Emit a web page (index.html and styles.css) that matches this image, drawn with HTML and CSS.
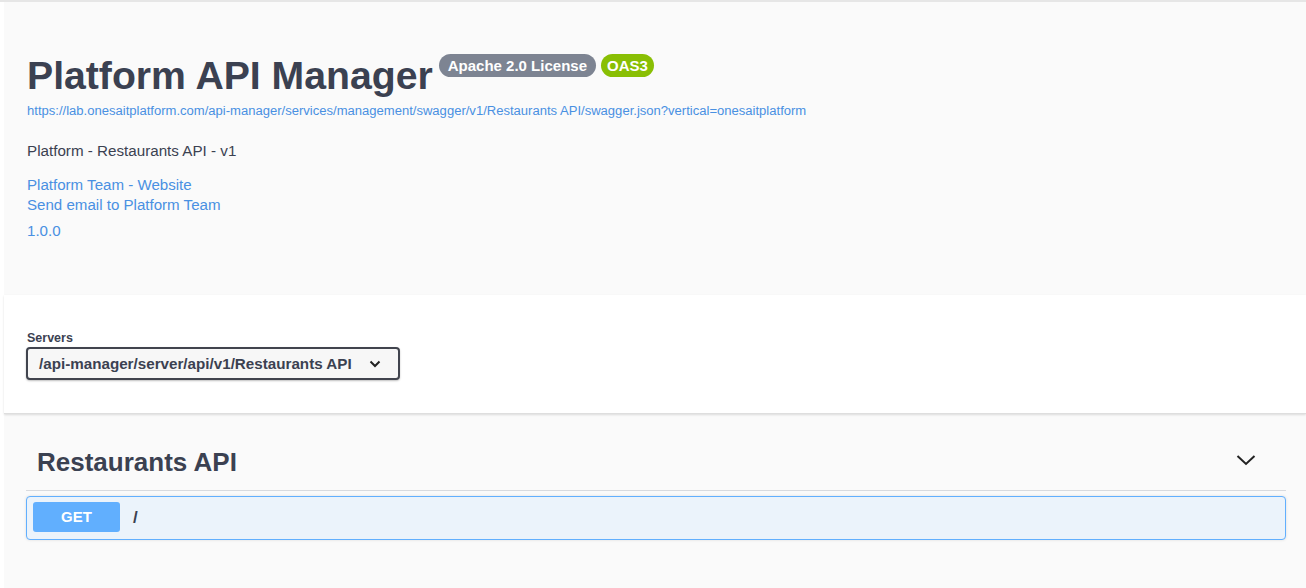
FILE: index.html
```html
<!DOCTYPE html>
<html>
<head>
<meta charset="utf-8">
<link rel="stylesheet" href="styles.css">
</head>
<body>
<div class="topline"></div>
<div class="page">
  <section class="info">
    <div class="title-row">
      <h2 class="title">Platform API Manager</h2>
      <span class="badge badge-license">Apache 2.0 License</span>
      <span class="badge badge-oas">OAS3</span>
    </div>
    <a class="spec-url" href="#">https://lab.onesaitplatform.com/api-manager/services/management/swagger/v1/Restaurants API/swagger.json?vertical=onesaitplatform</a>
    <p class="description">Platform - Restaurants API - v1</p>
    <div class="contact">
      <a class="link" href="#">Platform Team - Website</a>
      <a class="link" href="#">Send email to Platform Team</a>
    </div>
    <div class="version">1.0.0</div>
  </section>
  <section class="servers">
    <div class="servers-label">Servers</div>
    <div class="select">
      <span class="select-text">/api-manager/server/api/v1/Restaurants API</span>
      <svg class="select-chevron" width="12" height="8" viewBox="0 0 12 8"><path d="M1.5 1.5 L6 6 L10.5 1.5" fill="none" stroke="#222" stroke-width="2"/></svg>
    </div>
  </section>
  <section class="tags">
    <div class="tag-header">
      <h3 class="tag-title">Restaurants API</h3>
      <svg class="tag-chevron" width="20" height="12" viewBox="0 0 20 12"><path d="M1.5 2 L10 10 L18.5 2" fill="none" stroke="#222" stroke-width="2"/></svg>
    </div>
    <div class="opblock">
      <span class="method">GET</span>
      <span class="path">/</span>
    </div>
  </section>
</div>
</body>
</html>
```
FILE: styles.css
```css
html, body {
  margin: 0;
  padding: 0;
  background: #ffffff;
  font-family: "Liberation Sans", Arial, sans-serif;
  color: #3b4151;
}

.topline {
  height: 2px;
  background: #e6e6e6;
}

.page {
  margin-left: 4px;
}

.info {
  background: #fafafa;
  padding: 50px 20px 54px 22px;
  display: flex;
  flex-direction: column;
  align-items: flex-start;
}

.title-row {
  display: flex;
  align-items: flex-start;
}

.title {
  margin: 0;
  font-size: 39.2px;
  line-height: 47px;
  font-weight: 700;
  color: #3b4151;
  padding-left: 1px;
}

.badge {
  display: inline-block;
  margin-top: 2px;
  height: 23px;
  line-height: 23px;
  border-radius: 12px;
  color: #ffffff;
  font-weight: 700;
  font-size: 15px;
  padding: 0 9px;
}

.badge-license {
  background: #7d8492;
  margin-left: 6px;
}

.badge-oas {
  background: #89bf04;
  margin-left: 5px;
  padding: 0 6px;
}

.spec-url {
  margin-top: 4px;
  margin-left: 1px;
  font-size: 13.05px;
  line-height: 16px;
  color: #4990e2;
  text-decoration: none;
}

.description {
  margin: 22px 0 0 1px;
  font-size: 15.2px;
  line-height: 20px;
  color: #3b4151;
}

.contact {
  margin-top: 14px;
  margin-left: 1px;
  display: flex;
  flex-direction: column;
}

.link {
  font-size: 15.1px;
  line-height: 20px;
  color: #4990e2;
  text-decoration: none;
}

.version {
  margin-top: 6px;
  margin-left: 1px;
  font-size: 15.1px;
  line-height: 20px;
  color: #4990e2;
}

.servers {
  background: #ffffff;
  padding: 35px 20px 33px 22px;
  border-bottom: 1px solid #dedede;
  box-shadow: 0 1px 2px rgba(0, 0, 0, 0.12);
  position: relative;
}

.servers-label {
  font-size: 12.5px;
  line-height: 16px;
  font-weight: 700;
  margin-left: 1px;
}

.select {
  margin-top: 1px;
  box-sizing: border-box;
  width: 374px;
  height: 33px;
  border: 2px solid #41444e;
  border-radius: 4px;
  background: #f7f7f7;
  box-shadow: 0 1px 2px rgba(0, 0, 0, 0.25);
  display: flex;
  align-items: center;
  justify-content: space-between;
  padding: 0 17px 0 11px;
}

.select-text {
  font-size: 15.2px;
  font-weight: 700;
  color: #3b4151;
}

.tags {
  background: #fafafa;
  padding: 20px 20px 48px 22px;
}

.tag-header {
  display: flex;
  align-items: center;
  justify-content: space-between;
  padding: 10px 30px 10px 11px;
  border-bottom: 1px solid #d8dade;
}

.tag-title {
  margin: 0;
  font-size: 26px;
  line-height: 36px;
  font-weight: 700;
  color: #3b4151;
}

.tag-chevron {
  margin-top: -4px;
}

.opblock {
  margin-top: 5px;
  box-sizing: border-box;
  height: 44px;
  background: #ebf3fb;
  border: 1px solid #61affe;
  border-radius: 4px;
  box-shadow: 0 0 3px rgba(0, 0, 0, 0.12);
  display: flex;
  align-items: center;
  padding: 0 6px;
}

.method {
  width: 87px;
  height: 30px;
  line-height: 30px;
  text-align: center;
  background: #61affe;
  color: #ffffff;
  font-weight: 700;
  font-size: 15px;
  border-radius: 3px;
  margin-top: -2px;
}

.path {
  margin-left: 13px;
  font-size: 17px;
  font-weight: 700;
  color: #3b4151;
}
```
